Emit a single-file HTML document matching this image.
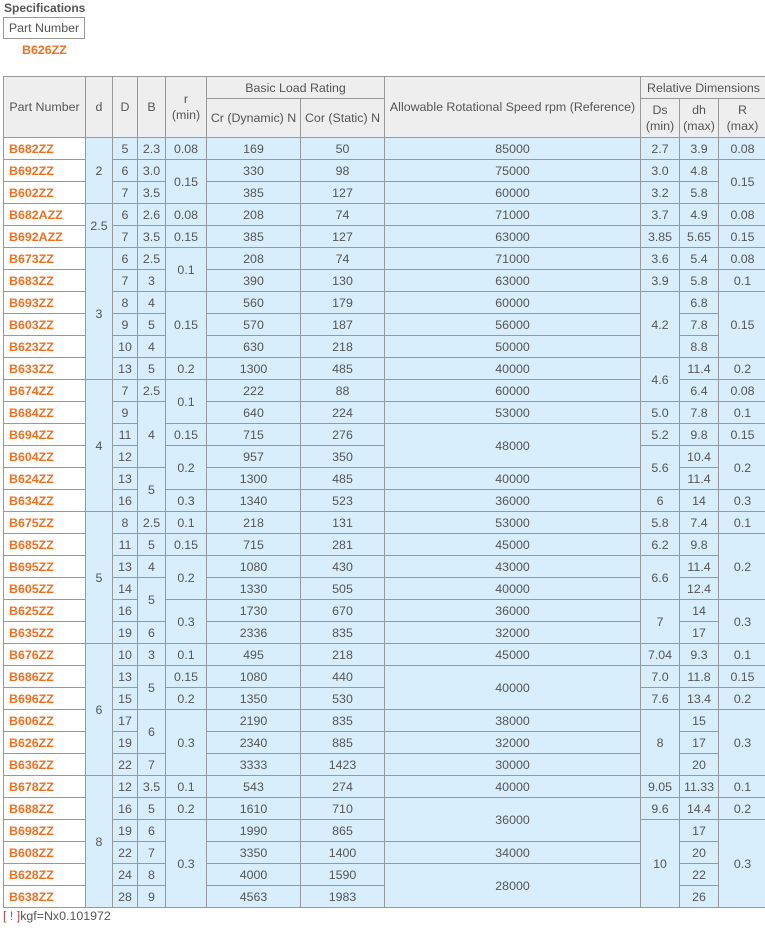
<!DOCTYPE html>
<html><head><meta charset="utf-8"><style>
body{margin:0;background:#fff;font-family:"Liberation Sans",Arial,sans-serif;font-size:12.4px;color:#555;}
.spec{position:absolute;left:4px;top:1px;font-weight:bold;font-size:12px;color:#555}
.pn{position:absolute;left:3px;top:17px;width:82px;height:22px;border:1px solid #999;box-sizing:border-box;text-align:center;line-height:20px;color:#555}
.pv{position:absolute;left:22px;top:43px;font-weight:bold;color:#f07020}
table{position:absolute;left:3px;top:76px;border-collapse:collapse;table-layout:fixed;width:763px}
td,th{border:1px solid #999;padding:0;text-align:center;font-weight:normal;line-height:14px}
th{background:#eee;color:#555;line-height:16px}
td{background:#d8eefc;height:21px}
td.p{background:#fff;text-align:left;padding-left:5px;color:#f07020;font-weight:bold}
.foot{position:absolute;left:3px;top:909px;}
.foot b{color:#c44;font-weight:normal}
</style></head><body>
<div class="spec">Specifications</div>
<div class="pn">Part Number</div>
<div class="pv">B626ZZ</div>
<table>
<colgroup><col style="width:82px"><col style="width:27px"><col style="width:25px"><col style="width:28px"><col style="width:41px"><col style="width:94px"><col style="width:84px"><col style="width:256px"><col style="width:39px"><col style="width:39px"><col style="width:48px"></colgroup>
<tr style="height:22px"><th rowspan="2">Part Number</th><th rowspan="2">d</th><th rowspan="2">D</th><th rowspan="2">B</th><th rowspan="2">r<br>(min)</th><th colspan="2">Basic Load Rating</th><th rowspan="2">Allowable Rotational Speed rpm (Reference)</th><th colspan="3">Relative Dimensions</th></tr>
<tr style="height:39px"><th>Cr (Dynamic) N</th><th>Cor (Static) N</th><th>Ds<br>(min)</th><th>dh<br>(max)</th><th>R<br>(max)</th></tr>
<tr><td class="p">B682ZZ</td><td rowspan="3">2</td><td>5</td><td>2.3</td><td>0.08</td><td>169</td><td>50</td><td>85000</td><td>2.7</td><td>3.9</td><td>0.08</td></tr>
<tr><td class="p">B692ZZ</td><td>6</td><td>3.0</td><td rowspan="2">0.15</td><td>330</td><td>98</td><td>75000</td><td>3.0</td><td>4.8</td><td rowspan="2">0.15</td></tr>
<tr><td class="p">B602ZZ</td><td>7</td><td>3.5</td><td>385</td><td>127</td><td>60000</td><td>3.2</td><td>5.8</td></tr>
<tr><td class="p">B682AZZ</td><td rowspan="2">2.5</td><td>6</td><td>2.6</td><td>0.08</td><td>208</td><td>74</td><td>71000</td><td>3.7</td><td>4.9</td><td>0.08</td></tr>
<tr><td class="p">B692AZZ</td><td>7</td><td>3.5</td><td>0.15</td><td>385</td><td>127</td><td>63000</td><td>3.85</td><td>5.65</td><td>0.15</td></tr>
<tr><td class="p">B673ZZ</td><td rowspan="6">3</td><td>6</td><td>2.5</td><td rowspan="2">0.1</td><td>208</td><td>74</td><td>71000</td><td>3.6</td><td>5.4</td><td>0.08</td></tr>
<tr><td class="p">B683ZZ</td><td>7</td><td>3</td><td>390</td><td>130</td><td>63000</td><td>3.9</td><td>5.8</td><td>0.1</td></tr>
<tr><td class="p">B693ZZ</td><td>8</td><td>4</td><td rowspan="3">0.15</td><td>560</td><td>179</td><td>60000</td><td rowspan="3">4.2</td><td>6.8</td><td rowspan="3">0.15</td></tr>
<tr><td class="p">B603ZZ</td><td>9</td><td>5</td><td>570</td><td>187</td><td>56000</td><td>7.8</td></tr>
<tr><td class="p">B623ZZ</td><td>10</td><td>4</td><td>630</td><td>218</td><td>50000</td><td>8.8</td></tr>
<tr><td class="p">B633ZZ</td><td>13</td><td>5</td><td>0.2</td><td>1300</td><td>485</td><td>40000</td><td rowspan="2">4.6</td><td>11.4</td><td>0.2</td></tr>
<tr><td class="p">B674ZZ</td><td rowspan="6">4</td><td>7</td><td>2.5</td><td rowspan="2">0.1</td><td>222</td><td>88</td><td>60000</td><td>6.4</td><td>0.08</td></tr>
<tr><td class="p">B684ZZ</td><td>9</td><td rowspan="3">4</td><td>640</td><td>224</td><td>53000</td><td>5.0</td><td>7.8</td><td>0.1</td></tr>
<tr><td class="p">B694ZZ</td><td>11</td><td>0.15</td><td>715</td><td>276</td><td rowspan="2">48000</td><td>5.2</td><td>9.8</td><td>0.15</td></tr>
<tr><td class="p">B604ZZ</td><td>12</td><td rowspan="2">0.2</td><td>957</td><td>350</td><td rowspan="2">5.6</td><td>10.4</td><td rowspan="2">0.2</td></tr>
<tr><td class="p">B624ZZ</td><td>13</td><td rowspan="2">5</td><td>1300</td><td>485</td><td>40000</td><td>11.4</td></tr>
<tr><td class="p">B634ZZ</td><td>16</td><td>0.3</td><td>1340</td><td>523</td><td>36000</td><td>6</td><td>14</td><td>0.3</td></tr>
<tr><td class="p">B675ZZ</td><td rowspan="6">5</td><td>8</td><td>2.5</td><td>0.1</td><td>218</td><td>131</td><td>53000</td><td>5.8</td><td>7.4</td><td>0.1</td></tr>
<tr><td class="p">B685ZZ</td><td>11</td><td>5</td><td>0.15</td><td>715</td><td>281</td><td>45000</td><td>6.2</td><td>9.8</td><td rowspan="3">0.2</td></tr>
<tr><td class="p">B695ZZ</td><td>13</td><td>4</td><td rowspan="2">0.2</td><td>1080</td><td>430</td><td>43000</td><td rowspan="2">6.6</td><td>11.4</td></tr>
<tr><td class="p">B605ZZ</td><td>14</td><td rowspan="2">5</td><td>1330</td><td>505</td><td>40000</td><td>12.4</td></tr>
<tr><td class="p">B625ZZ</td><td>16</td><td rowspan="2">0.3</td><td>1730</td><td>670</td><td>36000</td><td rowspan="2">7</td><td>14</td><td rowspan="2">0.3</td></tr>
<tr><td class="p">B635ZZ</td><td>19</td><td>6</td><td>2336</td><td>835</td><td>32000</td><td>17</td></tr>
<tr><td class="p">B676ZZ</td><td rowspan="6">6</td><td>10</td><td>3</td><td>0.1</td><td>495</td><td>218</td><td>45000</td><td>7.04</td><td>9.3</td><td>0.1</td></tr>
<tr><td class="p">B686ZZ</td><td>13</td><td rowspan="2">5</td><td>0.15</td><td>1080</td><td>440</td><td rowspan="2">40000</td><td>7.0</td><td>11.8</td><td>0.15</td></tr>
<tr><td class="p">B696ZZ</td><td>15</td><td>0.2</td><td>1350</td><td>530</td><td>7.6</td><td>13.4</td><td>0.2</td></tr>
<tr><td class="p">B606ZZ</td><td>17</td><td rowspan="2">6</td><td rowspan="3">0.3</td><td>2190</td><td>835</td><td>38000</td><td rowspan="3">8</td><td>15</td><td rowspan="3">0.3</td></tr>
<tr><td class="p">B626ZZ</td><td>19</td><td>2340</td><td>885</td><td>32000</td><td>17</td></tr>
<tr><td class="p">B636ZZ</td><td>22</td><td>7</td><td>3333</td><td>1423</td><td>30000</td><td>20</td></tr>
<tr><td class="p">B678ZZ</td><td rowspan="6">8</td><td>12</td><td>3.5</td><td>0.1</td><td>543</td><td>274</td><td>40000</td><td>9.05</td><td>11.33</td><td>0.1</td></tr>
<tr><td class="p">B688ZZ</td><td>16</td><td>5</td><td>0.2</td><td>1610</td><td>710</td><td rowspan="2">36000</td><td>9.6</td><td>14.4</td><td>0.2</td></tr>
<tr><td class="p">B698ZZ</td><td>19</td><td>6</td><td rowspan="4">0.3</td><td>1990</td><td>865</td><td rowspan="4">10</td><td>17</td><td rowspan="4">0.3</td></tr>
<tr><td class="p">B608ZZ</td><td>22</td><td>7</td><td>3350</td><td>1400</td><td>34000</td><td>20</td></tr>
<tr><td class="p">B628ZZ</td><td>24</td><td>8</td><td>4000</td><td>1590</td><td rowspan="2">28000</td><td>22</td></tr>
<tr><td class="p">B638ZZ</td><td>28</td><td>9</td><td>4563</td><td>1983</td><td>26</td></tr>
</table>
<div class="foot"><b>[ ! ]</b>kgf=Nx0.101972</div>
</body></html>
